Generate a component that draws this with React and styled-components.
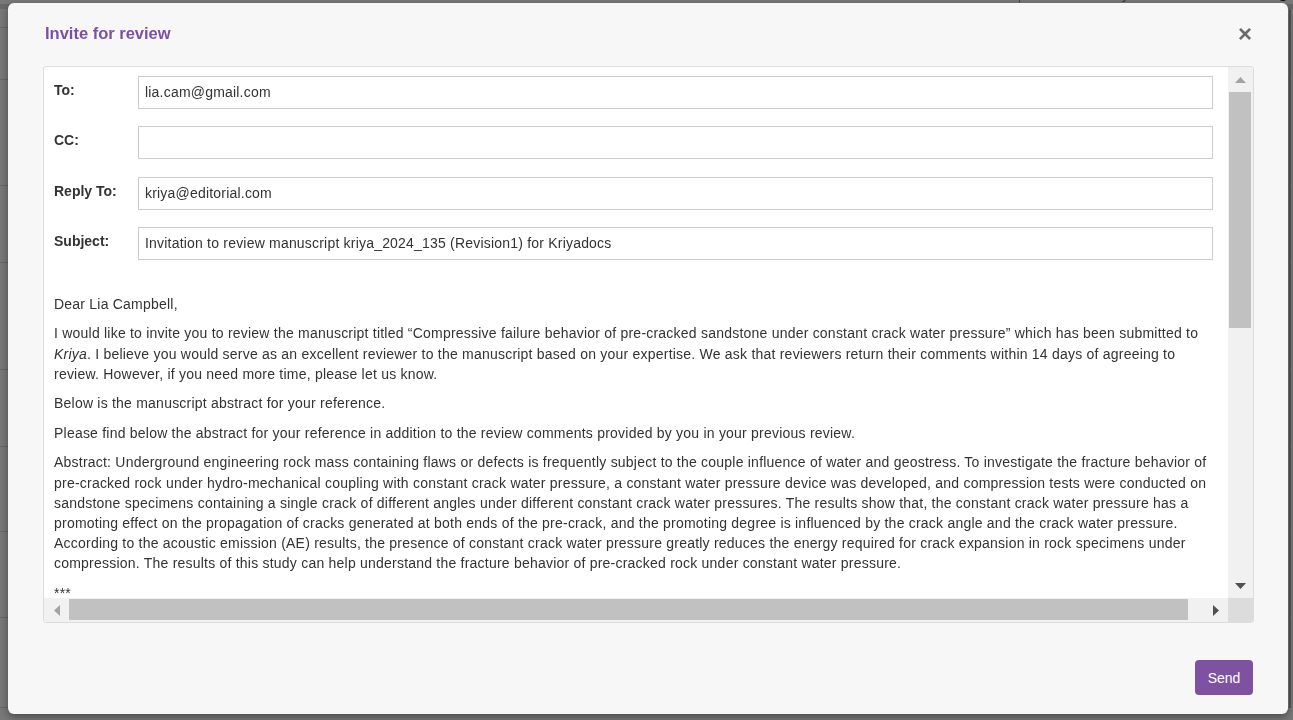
import React from "react";
import styled, { createGlobalStyle } from "styled-components";

const GlobalStyle = createGlobalStyle`
  html, body { margin: 0; padding: 0; }
  body {
    font-family: "Liberation Sans", Arial, sans-serif;
    background: #ffffff;
    color: #333333;
    overflow: hidden;
  }
  * { box-sizing: border-box; }
`;

/* ---------- page behind the dialog ---------- */
const Page = styled.div`
  width: 1293px;
  height: 720px;
  background: #ffffff;
  overflow: hidden;
`;

const PageTop = styled.div`
  height: 24px;
  margin-top: -15px;
  display: flex;
  align-items: center;
  gap: 48px;
  padding: 0 8px 0 0;
  font-size: 14px;
  border-bottom: 5px solid #dddddd;
`;

const PageCrumb = styled.span`
  color: #555555;
  margin-left: -4px;
`;

const PageTitle = styled.span`
  color: #5a2d82;
  font-weight: bold;
  font-size: 16px;
  letter-spacing: 1px;
`;

const PageSearch = styled.div`
  margin-left: auto;
  width: 210px;
  height: 22px;
  border-left: 1px solid #999;
  color: #777;
  font-size: 13px;
  padding-left: 50px;
  display: flex;
  align-items: center;
`;

const PageDot = styled.span`
  width: 12px;
  height: 12px;
  border-radius: 50%;
  background: #111;
  margin-right: -4px;
`;

const PageRow = styled.div`
  height: ${(p) => p.$h}px;
  border-bottom: 1px solid #d8d8d8;
  border-right: 2px solid #bbbbbb;
  margin-right: 2px;
`;

const Overlay = styled.div`
  position: fixed;
  inset: 0;
  background: rgba(0, 0, 0, 0.53);
`;

/* ---------- dialog ---------- */
const Modal = styled.div`
  position: fixed;
  top: 3px;
  left: 8px;
  width: 1280px;
  height: 711px;
  background: #f7f7f7;
  border-radius: 6px;
  box-shadow: 0 3px 9px rgba(0, 0, 0, 0.4);
  display: flex;
  flex-direction: column;
  padding: 0 34px 0 35px;
`;

const Header = styled.div`
  height: 63px;
  flex: none;
  display: flex;
  align-items: center;
  justify-content: space-between;
  padding: 0 0 0 2px;
`;

const Title = styled.h4`
  margin: 0;
  font-size: 16.5px;
  font-weight: bold;
  color: #7b52a3;
  padding-bottom: 3px;
`;

const Close = styled.button`
  border: 0;
  background: transparent;
  padding: 0 0 2px;
  margin-right: 2px;
  font-family: "Liberation Sans", Arial, sans-serif;
  font-size: 24px;
  font-weight: bold;
  line-height: 1;
  color: #6b6b6b;
  cursor: pointer;
`;

const ScrollFrame = styled.div`
  flex: none;
  height: 557px;
  background: #ffffff;
  border: 1px solid #dddddd;
  border-radius: 3px;
  display: grid;
  grid-template-columns: 1fr 25px;
  grid-template-rows: 1fr 24px;
  overflow: hidden;
`;

const Viewport = styled.div`
  overflow: hidden;
  padding: 9px 15px 0 10px;
`;

const FieldRow = styled.div`
  display: grid;
  grid-template-columns: 84px 1fr;
  margin-bottom: 17.3px;
`;

const Label = styled.label`
  font-size: 14px;
  font-weight: bold;
  line-height: 20px;
  padding-top: 4px;
  color: #333333;
`;

const Input = styled.div`
  height: 33px;
  border: 1px solid #cccccc;
  background: #ffffff;
  padding: 0 6px 1px;
  display: flex;
  align-items: center;
  font-size: 14px;
  letter-spacing: 0.2px;
  color: #333333;
  white-space: nowrap;
`;

const Body = styled.div`
  margin-top: 34px;
  font-size: 14px;
  letter-spacing: 0.22px;
  line-height: 20.2px;
  color: #333333;
`;

const Para = styled.p`
  margin: 0 0 9.3px;
`;

const VBar = styled.div`
  background: #f1f1f1;
  display: flex;
  flex-direction: column;
`;

const HBar = styled.div`
  background: #f1f1f1;
  display: flex;
  align-items: stretch;
`;

const Corner = styled.div`
  background: #dcdcdc;
`;

const ArrowBtn = styled.div`
  flex: none;
  width: 25px;
  height: ${(p) => (p.$h ? "24px" : "25px")};
  display: flex;
  align-items: center;
  justify-content: center;
`;

const VThumb = styled.div`
  flex: none;
  height: 236px;
  margin: 0 2px 0 1px;
  background: #c1c1c1;
`;

const HThumb = styled.div`
  flex: none;
  width: 1119px;
  margin: 1px 0 2px;
  background: #c1c1c1;
`;

const Spacer = styled.div`
  flex: 1;
`;

const Footer = styled.div`
  display: flex;
  justify-content: flex-end;
  padding-top: 37px;
`;

const SendButton = styled.button`
  width: 58px;
  height: 35px;
  border: 0;
  border-radius: 4px;
  background: #7e52a0;
  color: #ffffff;
  font-family: "Liberation Sans", Arial, sans-serif;
  font-size: 14px;
  cursor: pointer;
  margin-right: 1px;
`;

const Tri = ({ dir, color }) => {
  const pts = {
    up: "0,6 5.5,0 11,6",
    down: "0,0 11,0 5.5,6",
    left: "6,0 6,11 0,5.5",
    right: "0,0 0,11 6,5.5",
  }[dir];
  const vertical = dir === "up" || dir === "down";
  return (
    <svg width={vertical ? 11 : 6} height={vertical ? 6 : 11} viewBox={vertical ? "0 0 11 6" : "0 0 6 11"}>
      <polygon points={pts} fill={color} />
    </svg>
  );
};

const fields = [
  { label: "To:", value: "lia.cam@gmail.com" },
  { label: "CC:", value: "" },
  { label: "Reply To:", value: "kriya@editorial.com" },
  { label: "Subject:", value: "Invitation to review manuscript kriya_2024_135 (Revision1) for Kriyadocs" },
];

const rows = [19, 52, 106, 77, 107, 77, 85, 86, 90];

export default function App() {
  return (
    <>
      <GlobalStyle />
      <Page>
        <PageTop>
          <PageCrumb>| sciences</PageCrumb>
          <PageTitle>Invite &amp; track rev</PageTitle>
          <PageSearch>Search by name / affiliation</PageSearch>
          <PageDot />
        </PageTop>
        {rows.map((h, i) => (
          <PageRow key={i} $h={h} />
        ))}
      </Page>
      <Overlay />
      <Modal role="dialog">
        <Header>
          <Title>Invite for review</Title>
          <Close aria-label="Close">×</Close>
        </Header>
        <ScrollFrame>
          <Viewport>
            {fields.map((f) => (
              <FieldRow key={f.label}>
                <Label>{f.label}</Label>
                <Input>{f.value}</Input>
              </FieldRow>
            ))}
            <Body>
              <Para>Dear Lia Campbell,</Para>
              <Para>
                I would like to invite you to review the manuscript titled “Compressive failure behavior of
                pre-cracked sandstone under constant crack water pressure” which has been submitted to{" "}
                <em>Kriya</em>. I believe you would serve as an excellent reviewer to the manuscript based on
                your expertise. We ask that reviewers return their comments within 14 days of agreeing to
                review. However, if you need more time, please let us know.
              </Para>
              <Para>Below is the manuscript abstract for your reference.</Para>
              <Para>
                Please find below the abstract for your reference in addition to the review comments provided by
                you in your previous review.
              </Para>
              <Para>
                Abstract: Underground engineering rock mass containing flaws or defects is frequently subject to
                the couple influence of water and geostress. To investigate the fracture behavior of pre-cracked
                rock under hydro-mechanical coupling with constant crack water pressure, a constant water pressure
                device was developed, and compression tests were conducted on sandstone specimens containing a
                single crack of different angles under different constant crack water pressures. The results show
                that, the constant crack water pressure has a promoting effect on the propagation of cracks
                generated at both ends of the pre-crack, and the promoting degree is influenced by the crack angle
                and the crack water pressure. According to the acoustic emission (AE) results, the presence of
                constant crack water pressure greatly reduces the energy required for crack expansion in rock
                specimens under compression. The results of this study can help understand the fracture behavior
                of pre-cracked rock under constant water pressure.
              </Para>
              <Para>***</Para>
              <Para>Best regards,</Para>
            </Body>
          </Viewport>
          <VBar>
            <ArrowBtn>
              <Tri dir="up" color="#a3a3a3" />
            </ArrowBtn>
            <VThumb />
            <Spacer />
            <ArrowBtn>
              <Tri dir="down" color="#505050" />
            </ArrowBtn>
          </VBar>
          <HBar>
            <ArrowBtn $h>
              <Tri dir="left" color="#a3a3a3" />
            </ArrowBtn>
            <HThumb />
            <Spacer />
            <ArrowBtn $h>
              <Tri dir="right" color="#505050" />
            </ArrowBtn>
          </HBar>
          <Corner />
        </ScrollFrame>
        <Footer>
          <SendButton>Send</SendButton>
        </Footer>
      </Modal>
    </>
  );
}
